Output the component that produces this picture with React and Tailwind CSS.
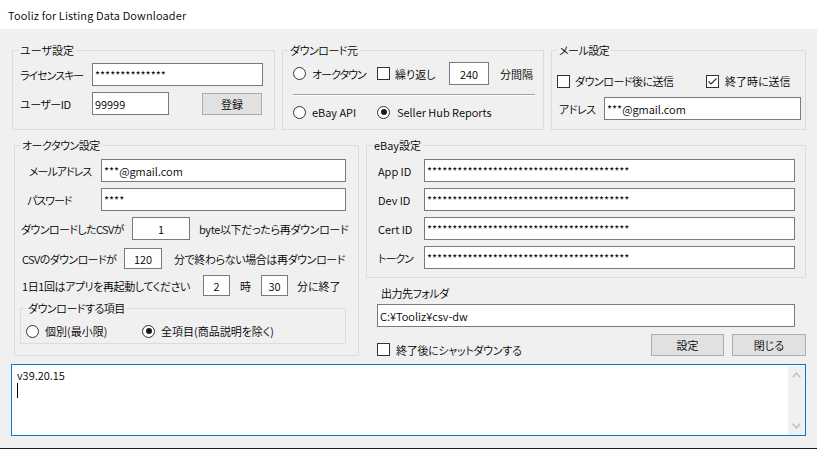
import React from 'react';

const Group = ({ label, labelClass = '', className, children }) => (
  <div className={`relative border border-[#dcdcdc] shrink-0 ${className}`}>
    <span className={`absolute top-[-9px] left-[5px] bg-[#f0f0f0] px-[2px] leading-[16px] ${labelClass}`}>{label}</span>
    {children}
  </div>
);

const Radio = ({ checked }) => (
  <span className="w-[13px] h-[13px] rounded-full border border-[#333333] bg-white flex items-center justify-center shrink-0">
    {checked && <span className="w-[6px] h-[6px] rounded-full bg-[#1a1a1a]" />}
  </span>
);

const Check = ({ checked }) => (
  <span className="w-[13px] h-[13px] border border-[#333333] bg-white shrink-0 relative block">
    {checked && (
      <svg className="absolute left-0 top-0" width="11" height="11" viewBox="0 0 11 11">
        <path d="M1.5 5.5 L4 8 L9.5 2.5" fill="none" stroke="#333333" strokeWidth="1.2" />
      </svg>
    )}
  </span>
);

const Input = ({ w, h = 'h-[23px]', value, center }) => (
  <div className={`${w} ${h} border border-[#7a7a7a] bg-white flex items-center shrink-0 overflow-hidden ${center ? 'justify-center' : 'pl-[2px]'}`}>
    {value}
  </div>
);

const Button = ({ className, children }) => (
  <div className={`${className} bg-[#e1e1e1] border border-[#adadad] flex items-center justify-center shrink-0`}>{children}</div>
);

const stars40 = '*'.repeat(40);

export default function App() {
  return (
    <div className="w-[817px] h-[449px] bg-[#f0f0f0] flex flex-col overflow-hidden border-b border-[#1c1c1c] text-[11px] leading-[16px] font-[350] text-black whitespace-nowrap font-[Noto_Sans_CJK_JP,sans-serif] [font-feature-settings:'palt']">
      <div className="h-[29px] bg-white flex items-center pl-[8px] shrink-0 tracking-[0.15px]">Tooliz for Listing Data Downloader</div>

      <div className="flex mt-[21px] pl-[12px] gap-[7px] shrink-0">
        <Group label="ユーザ設定" className="w-[263px] h-[80px]">
          <div className="pt-[12px] pl-[7px]">
            <div className="flex items-center h-[23px]">
              <span className="w-[72px] tracking-[-1px]">ライセンスキー</span>
              <Input w="w-[171px]" value="**************" />
            </div>
            <div className="flex items-center h-[23px] mt-[6px]">
              <span className="w-[72px] tracking-[-0.5px]">ユーザーID</span>
              <Input w="w-[77px]" value="99999" />
              <Button className="ml-[33px] w-[60px] h-[22px]">登録</Button>
            </div>
          </div>
        </Group>

        <Group label="ダウンロード元" labelClass="tracking-[-0.5px]" className="w-[262px] h-[80px]">
          <div className="pt-[11px] pl-[10px]">
            <div className="flex items-center h-[23px]">
              <div className="w-[84px] flex items-center">
                <Radio />
                <span className="ml-[6px] tracking-[-1px]">オークタウン</span>
              </div>
              <Check />
              <span className="ml-[5px] w-[54px]">繰り返し</span>
              <Input w="w-[40px]" value="240" center />
              <span className="ml-[11px]">分間隔</span>
            </div>
            <div className="mt-[9px] w-[242px] border-t border-t-[#a0a0a0] border-b border-b-white" />
            <div className="mt-[8px] flex items-center h-[16px]">
              <div className="w-[84px] flex items-center">
                <Radio />
                <span className="ml-[6px]">eBay API</span>
              </div>
              <Radio checked />
              <span className="ml-[7px]">Seller Hub Reports</span>
            </div>
          </div>
        </Group>

        <Group label="メール設定" labelClass="tracking-[-0.5px]" className="w-[255px] h-[80px]">
          <div className="pt-[22px] pl-[5px]">
            <div className="flex items-center h-[16px]">
              <div className="w-[149px] flex items-center">
                <Check />
                <span className="ml-[5px] tracking-[-0.5px]">ダウンロード後に送信</span>
              </div>
              <Check checked />
              <span className="ml-[6px]">終了時に送信</span>
            </div>
            <div className="flex items-center h-[23px] mt-[8px] pl-[2px]">
              <span className="w-[45px] tracking-[-0.5px]">アドレス</span>
              <Input w="w-[197px]" value="***@gmail.com" />
            </div>
          </div>
        </Group>
      </div>

      <div className="flex mt-[15px] pl-[14px] gap-[7px] shrink-0">
        <Group label="オークタウン設定" labelClass="tracking-[-0.5px]" className="w-[345px] h-[211px]">
          <div className="pt-[13px]">
            <div className="flex items-center h-[23px] pl-[14px]">
              <span className="w-[72px] tracking-[-1px]">メールアドレス</span>
              <Input w="w-[245px]" value="***@gmail.com" />
            </div>
            <div className="flex items-center h-[23px] mt-[6px] pl-[12px]">
              <span className="w-[74px] tracking-[-1px]">パスワード</span>
              <Input w="w-[245px]" value="****" />
            </div>
            <div className="flex items-center h-[23px] mt-[6px] pl-[6px]">
              <span className="w-[111px] tracking-[-0.6px]">ダウンロードしたCSVが</span>
              <Input w="w-[58px]" value="1" center />
              <span className="ml-[9px] tracking-[-0.35px]">byte以下だったら再ダウンロード</span>
            </div>
            <div className="flex items-center h-[21px] mt-[8px] pl-[7px]">
              <span className="w-[102px] tracking-[-0.6px]">CSVのダウンロードが</span>
              <Input w="w-[38px]" h="h-[21px]" value="120" center />
              <span className="ml-[12px] tracking-[-0.4px]">分で終わらない場合は再ダウンロード</span>
            </div>
            <div className="flex items-center h-[21px] mt-[6px] pl-[7px]">
              <span className="w-[181px] tracking-[-0.4px]">1日1回はアプリを再起動してください</span>
              <Input w="w-[27px]" h="h-[21px]" value="2" center />
              <span className="ml-[10px] w-[21px]">時</span>
              <Input w="w-[27px]" h="h-[21px]" value="30" center />
              <span className="ml-[9px]">分に終了</span>
            </div>
            <Group label="ダウンロードする項目" labelClass="tracking-[-0.5px]" className="ml-[5px] mt-[12px] w-[326px] h-[36px]">
              <div className="mt-[14px] pl-[5px] flex items-center h-[16px]">
                <div className="w-[116px] flex items-center">
                  <Radio />
                  <span className="ml-[6px]">個別(最小限)</span>
                </div>
                <Radio checked />
                <span className="ml-[6px]">全項目(商品説明を除く)</span>
              </div>
            </Group>
          </div>
        </Group>

        <div className="w-[440px] flex flex-col shrink-0">
          <Group label="eBay設定" className="w-[440px] h-[133px]">
            <div className="pt-[13px] pl-[11px] flex flex-col gap-[6px]">
              {['App ID', 'Dev ID', 'Cert ID', 'トークン'].map((l) => (
                <div key={l} className="flex items-center h-[23px]">
                  <span className={l === 'トークン' ? 'w-[46px] tracking-[-1px]' : 'w-[46px]'}>{l}</span>
                  <Input w="w-[371px]" value={stars40} />
                </div>
              ))}
            </div>
          </Group>
          <div className="mt-[7px] pl-[15px] h-[16px] tracking-[-0.5px]">出力先フォルダ</div>
          <div className="mt-[3px] ml-[11px]">
            <Input w="w-[418px]" value="C:¥Tooliz¥csv-dw" />
          </div>
          <div className="mt-[7px] flex h-[22px]">
            <div className="self-end flex items-center h-[13px] ml-[11px]">
              <Check />
              <span className="ml-[6px] tracking-[-0.3px]">終了後にシャットダウンする</span>
            </div>
            <Button className="ml-auto w-[73px] h-[22px]">設定</Button>
            <Button className="ml-[8px] w-[74px] h-[22px]">閉じる</Button>
          </div>
        </div>
      </div>

      <div className="mt-[8px] ml-[11px] w-[795px] h-[72px] border border-[#0078d7] bg-white flex shrink-0">
        <div className="flex-1 pl-[5px] pt-[2px]">
          <div>v39.20.15</div>
          <div className="w-px h-[15px] bg-black" />
        </div>
        <div className="w-[17px] mt-[1px] bg-[#f0f0f0] flex flex-col items-center justify-between py-[6px]">
          <svg width="9" height="6" viewBox="0 0 9 6">
            <polyline points="0.8,5.2 4.5,1.2 8.2,5.2" fill="none" stroke="#c2c2c2" strokeWidth="1.6" />
          </svg>
          <svg width="9" height="6" viewBox="0 0 9 6">
            <polyline points="0.8,0.8 4.5,4.8 8.2,0.8" fill="none" stroke="#c2c2c2" strokeWidth="1.6" />
          </svg>
        </div>
      </div>
    </div>
  );
}
